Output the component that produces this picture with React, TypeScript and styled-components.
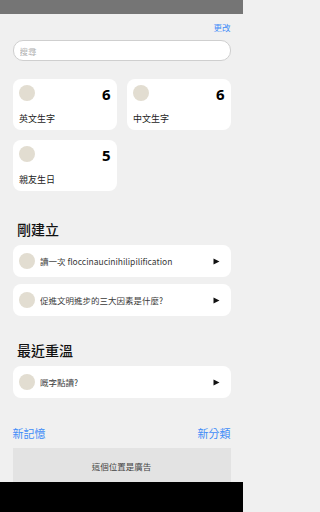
import * as React from 'react';
import styled, { createGlobalStyle } from 'styled-components';

const GlobalStyle = createGlobalStyle`
  html, body {
    margin: 0;
    padding: 0;
    background: #f0f0f0;
  }
  body {
    font-family: "Noto Sans", "Noto Sans CJK TC", sans-serif;
  }
  * {
    box-sizing: border-box;
  }
`;

interface Category {
  name: string;
  count: number;
}

const categories: Category[] = [
  { name: '英文生字', count: 6 },
  { name: '中文生字', count: 6 },
  { name: '親友生日', count: 5 },
];

const recentlyCreated = ['讀一次 floccinaucinihilipilification', '促進文明進步的三大因素是什麼?'];
const recentlyReviewed = ['嘅字點讀?'];

const PlayIcon = () => (
  <svg width="7" height="7" viewBox="0 0 7 7">
    <polygon points="0.5,0.5 6.5,3.5 0.5,6.5" fill="#111" />
  </svg>
);

export default function App() {
  return (
    <Screen>
      <GlobalStyle />
      <StatusBar />
      <Main>
        <TopRow>
          <LinkButton size={8.5}>更改</LinkButton>
        </TopRow>
        <SearchBox placeholder="搜尋" />

        <CardGrid>
          {categories.map((c) => (
            <CategoryCard key={c.name}>
              <CardTop>
                <Dot />
                <Count>{c.count}</Count>
              </CardTop>
              <CardLabel>{c.name}</CardLabel>
            </CategoryCard>
          ))}
        </CardGrid>

        <SectionTitle spaceAbove={31}>剛建立</SectionTitle>
        <List>
          {recentlyCreated.map((t) => (
            <ListItem key={t}>
              <Dot />
              <ItemText>{t}</ItemText>
              <PlayIcon />
            </ListItem>
          ))}
        </List>

        <SectionTitle spaceAbove={27}>最近重溫</SectionTitle>
        <List>
          {recentlyReviewed.map((t) => (
            <ListItem key={t}>
              <Dot />
              <ItemText>{t}</ItemText>
              <PlayIcon />
            </ListItem>
          ))}
        </List>

        <ActionRow>
          <LinkButton size={11}>新記憶</LinkButton>
          <LinkButton size={11}>新分類</LinkButton>
        </ActionRow>

        <AdBox>這個位置是廣告</AdBox>
      </Main>
      <NavBar />
    </Screen>
  );
}

const Screen = styled.div`
  width: 243px;
  height: 512px;
  display: flex;
  flex-direction: column;
  background: #f0f0f0;
  overflow: hidden;
`;

const StatusBar = styled.div`
  height: 14px;
  flex-shrink: 0;
  background: #757575;
`;

const NavBar = styled.div`
  height: 30px;
  flex-shrink: 0;
  background: #000;
`;

const Main = styled.div`
  flex: 1;
  min-height: 0;
  overflow: hidden;
  padding: 0 12.5px;
  display: flex;
  flex-direction: column;

  & > * {
    flex-shrink: 0;
  }
`;

const TopRow = styled.div`
  display: flex;
  justify-content: flex-end;
  align-items: center;
  height: 26px;
`;

const LinkButton = styled.span<{ size: number }>`
  color: #3f8cf8;
  font-family: "Noto Sans CJK TC", sans-serif;
  font-size: ${(p) => p.size}px;
  line-height: 1;
`;

const SearchBox = styled.input`
  height: 21px;
  border: 1px solid #cfcfcf;
  border-radius: 10px;
  background: #fff;
  padding: 0 6px;
  font-family: "Noto Sans CJK TC", sans-serif;
  font-size: 8.5px;
  outline: none;
  &::placeholder {
    color: #b0b0b0;
  }
`;

const CardGrid = styled.div`
  display: grid;
  grid-template-columns: 1fr 1fr;
  gap: 10px;
  margin-top: 18px;
`;

const CategoryCard = styled.div`
  background: #fff;
  border-radius: 8px;
  height: 51px;
  padding: 6px 6px 0 6.5px;
  display: flex;
  flex-direction: column;
`;

const CardTop = styled.div`
  display: flex;
  justify-content: space-between;
  align-items: flex-start;
`;

const Dot = styled.div`
  width: 16px;
  height: 16px;
  border-radius: 50%;
  background: #e2ddd1;
  flex-shrink: 0;
`;

const Count = styled.span`
  font-family: "Noto Sans", sans-serif;
  font-weight: 700;
  font-size: 15px;
  line-height: 1;
  color: #000;
  margin-top: 2px;
`;

const CardLabel = styled.span`
  margin-top: 12px;
  font-family: "Noto Sans CJK TC", sans-serif;
  font-size: 9px;
  line-height: 1;
  color: #222;
`;

const SectionTitle = styled.h2<{ spaceAbove: number }>`
  margin: ${(p) => p.spaceAbove}px 0 0 4.5px;
  height: 23px;
  font-family: "Noto Sans CJK TC", sans-serif;
  font-size: 14px;
  font-weight: 500;
  line-height: 14px;
  color: #111;
`;

const List = styled.div`
  display: flex;
  flex-direction: column;
  gap: 7px;
`;

const ListItem = styled.div`
  background: #fff;
  border-radius: 8px;
  height: 32px;
  display: flex;
  align-items: center;
  padding: 0 11px 0 6px;
  gap: 5.5px;
`;

const ItemText = styled.span`
  flex: 1;
  font-family: "Noto Sans CJK TC", sans-serif;
  font-size: 8.5px;
  color: #3a3a3a;
  white-space: nowrap;
  overflow: hidden;
`;

const ActionRow = styled.div`
  display: flex;
  justify-content: space-between;
  align-items: center;
  margin-top: 28px;
  height: 14px;
`;

const AdBox = styled.div`
  margin-top: 8px;
  height: 36px;
  background: #e3e3e3;
  display: flex;
  align-items: center;
  justify-content: center;
  font-family: "Noto Sans CJK TC", sans-serif;
  font-size: 8.5px;
  color: #444;
`;
